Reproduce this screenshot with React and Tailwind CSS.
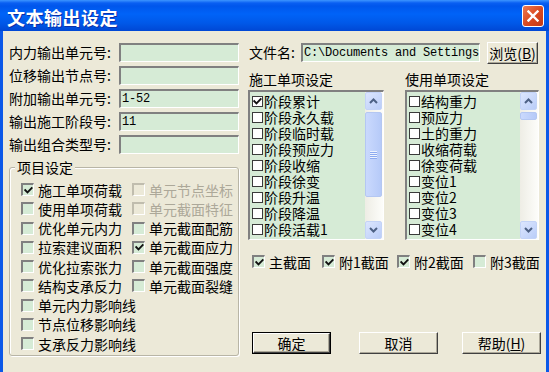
import React from 'react';

const sunken =
  'border-t-2 border-l-2 border-b border-r border-t-[#808080] border-l-[#808080] border-b-white border-r-white';

function Tick() {
  return (
    <svg width="9" height="9" viewBox="0 0 9 9">
      <path d="M1.3 4.1 L3.5 6.3 L7.7 2" fill="none" stroke="#111" strokeWidth="1.9" strokeLinecap="square" />
    </svg>
  );
}

function Check({ checked, disabled }) {
  const tone = disabled
    ? 'bg-[#ECE9D8] border-t-[#C0BDAE] border-l-[#C0BDAE]'
    : 'bg-[#D6EBD6] border-t-[#808080] border-l-[#808080]';
  return (
    <span
      className={`flex h-[13px] w-[13px] shrink-0 items-center justify-center border-t-2 border-l-2 border-b border-r border-b-white border-r-white ${tone}`}
    >
      {checked && <Tick />}
    </span>
  );
}

function CheckItem({ label, checked, disabled, className = '' }) {
  return (
    <div className={`flex items-center gap-[4px] ${className}`}>
      <Check checked={checked} disabled={disabled} />
      <span className={`whitespace-nowrap text-[14px] leading-[16px] ${disabled ? 'text-[#ACA899]' : 'text-black'}`}>
        {label}
      </span>
    </div>
  );
}

function Field({ value = '', className = '' }) {
  return (
    <div
      className={`h-[19px] shrink-0 overflow-hidden whitespace-nowrap bg-[#D6EBD6] pl-[1px] [font-family:'Liberation_Mono',monospace] text-[12px] leading-[16px] tracking-[-0.2px] ${sunken} ${className}`}
    >
      {value}
    </div>
  );
}

function SbButton({ up }) {
  return (
    <div className="flex h-[18px] shrink-0 items-center justify-center rounded-[2px] border border-[#C3D3F7] bg-[linear-gradient(135deg,#DCE6FE,#BACDF8)]">
      <svg width="9" height="6" viewBox="0 0 9 6">
        <path
          d={up ? 'M1 5 L4.5 1.5 L8 5' : 'M1 1 L4.5 4.5 L8 1'}
          fill="none"
          stroke="#4D6185"
          strokeWidth="2"
        />
      </svg>
    </div>
  );
}

function ScrollBar({ thumb, grip }) {
  return (
    <div className="flex w-[18px] shrink-0 flex-col bg-[linear-gradient(to_right,#EEEDE5,#FDFDFA)] pr-[1px]">
      <SbButton up />
      <div
        className={`mt-[2px] flex shrink-0 items-center justify-center rounded-[2px] border border-[#B4C7F2] bg-[linear-gradient(to_right,#CAD9FD,#B6CAF8)] ${thumb}`}
      >
        {grip && (
          <div className="flex w-[7px] flex-col gap-[1px]">
            <div className="h-[1px] bg-[#EEF3FE] shadow-[0_1px_0_#8DAAF0]" />
            <div className="h-[1px] bg-[#EEF3FE] shadow-[0_1px_0_#8DAAF0]" />
            <div className="h-[1px] bg-[#EEF3FE] shadow-[0_1px_0_#8DAAF0]" />
            <div className="h-[1px] bg-[#EEF3FE] shadow-[0_1px_0_#8DAAF0]" />
          </div>
        )}
      </div>
      <div className="flex-1" />
      <SbButton />
    </div>
  );
}

function ListBox({ items, thumb, grip, className = '' }) {
  return (
    <div className={`flex h-[150px] bg-[#D6EBD6] ${sunken} ${className}`}>
      <div className="flex-1 overflow-hidden pl-[2px] pt-[1px]">
        {items.map((it) => (
          <div key={it.label} className="flex h-[16px] items-center">
            <span className="flex h-[11px] w-[11px] shrink-0 items-center justify-center border border-[#3A3A3A] bg-white">
              {it.checked && <Tick />}
            </span>
            <span className="whitespace-nowrap pl-[1px] text-[14px] leading-[16px]">{it.label}</span>
          </div>
        ))}
      </div>
      <ScrollBar thumb={thumb} grip={grip} />
    </div>
  );
}

function Btn({ children, primary, className = '' }) {
  return (
    <div className={`flex h-[22px] shrink-0 ${primary ? 'border border-black' : ''} ${className}`}>
      <div className="flex h-full w-full items-center justify-center border-t border-l border-b border-r border-t-white border-l-white border-b-[#404040] border-r-[#404040] bg-[#ECE9D8] text-[14px] leading-[16px] shadow-[inset_-1px_-1px_0_#ACA899]">
        {children}
      </div>
    </div>
  );
}

const rows = [
  ['内力输出单元号:', ''],
  ['位移输出节点号:', ''],
  ['附加输出单元号:', '1-52'],
  ['输出施工阶段号:', '11'],
  ['输出组合类型号:', ''],
];

const groupLeft = [
  ['施工单项荷载', true],
  ['使用单项荷载', false],
  ['优化单元内力', false],
  ['拉索建议面积', false],
  ['优化拉索张力', false],
  ['结构支承反力', false],
  ['单元内力影响线', false],
  ['节点位移影响线', false],
  ['支承反力影响线', false],
];

const groupRight = [
  ['单元节点坐标', false, true],
  ['单元截面特征', false, true],
  ['单元截面配筋', false, false],
  ['单元截面应力', true, false],
  ['单元截面强度', false, false],
  ['单元截面裂缝', false, false],
];

const stageItems = [
  { label: '阶段累计', checked: true },
  { label: '阶段永久载' },
  { label: '阶段临时载' },
  { label: '阶段预应力' },
  { label: '阶段收缩' },
  { label: '阶段徐变' },
  { label: '阶段升温' },
  { label: '阶段降温' },
  { label: '阶段活载1' },
];

const useItems = [
  { label: '结构重力' },
  { label: '预应力' },
  { label: '土的重力' },
  { label: '收缩荷载' },
  { label: '徐变荷载' },
  { label: '变位1' },
  { label: '变位2' },
  { label: '变位3' },
  { label: '变位4' },
];

export default function App() {
  return (
    <div className="flex h-[372px] w-[549px] flex-col overflow-hidden [font-family:'Noto_Sans_CJK_SC',sans-serif] text-black">
      {/* 标题栏 */}
      <div className="flex h-[31px] shrink-0 items-center justify-between bg-[linear-gradient(to_bottom,#3D95FF_0px,#0A5FF2_3px,#0056EC_6px,#0063F8_45%,#0058E8_75%,#0047D4_100%)] pl-[7px] pr-[5px]">
        <span className="pt-[2px] text-[18px] font-bold leading-[20px] tracking-[0.5px] text-white [text-shadow:1px_1px_0_#0C2FA8]">
          文本输出设定
        </span>
        <div className="flex h-[22px] w-[22px] items-center justify-center rounded-[3px] border border-white bg-[linear-gradient(135deg,#EE7A52,#D9481F_55%,#C23A18)]">
          <svg width="12" height="12" viewBox="0 0 12 12">
            <path d="M1.5 1.5 L10.5 10.5 M10.5 1.5 L1.5 10.5" stroke="white" strokeWidth="2.4" strokeLinecap="square" />
          </svg>
        </div>
      </div>

      <div className="flex flex-1 gap-[9px] border-x-[3px] border-[#0B58E8] bg-[#ECE9D8] pl-[6px] pt-[12px]">
        {/* 左侧 */}
        <div className="flex w-[230px] flex-col">
          <div className="flex flex-col gap-[4px]">
            {rows.map(([label, value]) => (
              <div key={label} className="flex h-[19px] items-center">
                <span className="w-[110px] whitespace-nowrap text-[14px] leading-[19px]">{label}</span>
                <Field value={value} className="w-[120px]" />
              </div>
            ))}
          </div>

          <div className="relative mt-[13px] h-[189px] rounded-[3px] border border-[#B8B5A6] pl-[11px] pt-[12px] shadow-[inset_1px_1px_0_#fff,1px_1px_0_#fff]">
            <span className="absolute left-[5px] top-[-9px] bg-[#ECE9D8] px-[2px] text-[14px] leading-[16px]">项目设定</span>
            <div className="flex">
              <div className="flex w-[111px] flex-col">
                {groupLeft.map(([label, checked]) => (
                  <CheckItem key={label} label={label} checked={checked} className="h-[19.25px]" />
                ))}
              </div>
              <div className="flex flex-col">
                {groupRight.map(([label, checked, disabled]) => (
                  <CheckItem key={label} label={label} checked={checked} disabled={disabled} className="h-[19.25px]" />
                ))}
              </div>
            </div>
          </div>
        </div>

        {/* 右侧 */}
        <div className="flex w-[293px] flex-col">
          <div className="flex h-[19px] items-center">
            <span className="w-[53px] shrink-0 whitespace-nowrap pl-[1px] text-[14px] leading-[19px]">文件名:</span>
            <Field value="C:\Documents and Settings" className="w-[179px]" />
            <Btn className="ml-[7px] h-[21px] w-[51px]">
              浏览(<span className="underline">B</span>)
            </Btn>
          </div>

          <div className="mt-[9px] flex gap-[21px]">
            <div className="flex w-[136px] flex-col">
              <span className="h-[16px] pl-[1px] text-[14px] leading-[16px]">施工单项设定</span>
              <ListBox items={stageItems} thumb="h-[85px]" grip className="mt-[3px]" />
            </div>
            <div className="flex w-[134px] flex-col">
              <span className="h-[16px] text-[14px] leading-[16px]">使用单项设定</span>
              <ListBox items={useItems} thumb="h-[8px]" className="mt-[3px]" />
            </div>
          </div>

          <div className="mt-[15px] flex h-[13px] items-center pl-[4px]">
            <CheckItem label="主截面" checked className="w-[70px]" />
            <CheckItem label="附1截面" checked className="w-[75px]" />
            <CheckItem label="附2截面" checked className="w-[76px]" />
            <CheckItem label="附3截面" />
          </div>

          <div className="mt-[64px] flex pl-[4px]">
            <Btn primary className="w-[79px]">确定</Btn>
            <Btn className="ml-[28px] w-[79px]">取消</Btn>
            <Btn className="ml-[24px] w-[79px]">
              帮助(<span className="underline">H</span>)
            </Btn>
          </div>
        </div>
      </div>
    </div>
  );
}
